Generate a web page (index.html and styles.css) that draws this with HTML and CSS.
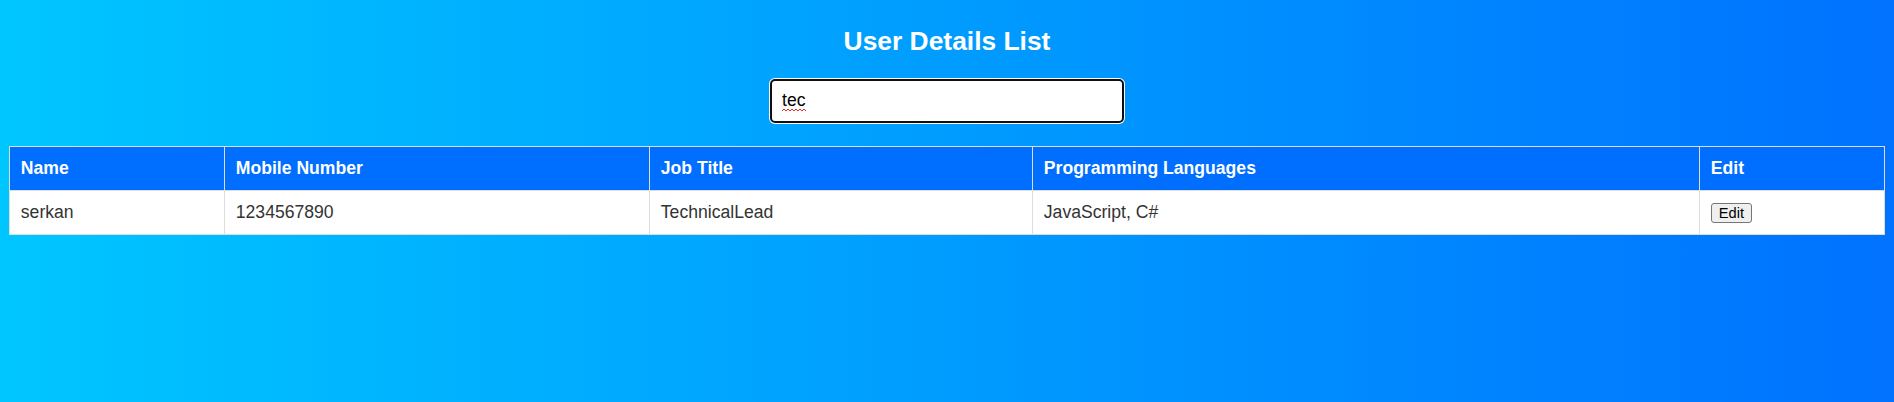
FILE: index.html
```html
<!DOCTYPE html>
<html lang="en">
<head>
<meta charset="utf-8">
<title>User Details List</title>
<link rel="stylesheet" href="styles.css">
</head>
<body>
<div class="page">
  <h2 class="title">User Details List</h2>
  <div class="search-row">
    <div class="search-wrap">
      <input class="search-input" type="text" value="tec" aria-label="Search">
      <svg class="spell" width="24" height="4" viewBox="0 0 24 4" aria-hidden="true"><path d="M0 3 L2 1 L4 3 L6 1 L8 3 L10 1 L12 3 L14 1 L16 3 L18 1 L20 3 L22 1 L24 3" fill="none" stroke="#e8262c" stroke-width="1"/></svg>
    </div>
  </div>
  <table class="users">
    <colgroup>
      <col class="c-name">
      <col class="c-mobile">
      <col class="c-job">
      <col class="c-lang">
      <col class="c-edit">
    </colgroup>
    <thead>
      <tr>
        <th>Name</th>
        <th>Mobile Number</th>
        <th>Job Title</th>
        <th>Programming Languages</th>
        <th>Edit</th>
      </tr>
    </thead>
    <tbody>
      <tr>
        <td>serkan</td>
        <td>1234567890</td>
        <td>TechnicalLead</td>
        <td>JavaScript, C#</td>
        <td><button class="edit-btn" type="button">Edit</button></td>
      </tr>
    </tbody>
  </table>
</div>
</body>
</html>
```

FILE: styles.css
```css
html, body {
  margin: 0;
  padding: 0;
}

body {
  min-height: 100vh;
  background: linear-gradient(to right, #00c6ff, #0072ff);
  font-family: "Liberation Sans", Arial, sans-serif;
}

.page {
  padding: 8.8px;
}

.title {
  margin: 17px 0 22px;
  color: #ffffff;
  font-size: 26.4px;
  font-weight: bold;
  text-align: center;
  line-height: normal;
}

.search-row {
  display: flex;
  justify-content: center;
  margin-bottom: 23px;
}

.search-wrap {
  position: relative;
}

.search-input {
  display: block;
  box-sizing: border-box;
  width: 354px;
  height: 44px;
  padding: 0 10px;
  border: 2px solid #101010;
  border-radius: 5px;
  box-shadow: 0 0 0 1px #ffffff;
  background: #ffffff;
  color: #000000;
  font-family: "Liberation Sans", Arial, sans-serif;
  font-size: 17.6px;
  outline: none;
}

.spell {
  position: absolute;
  left: 12px;
  top: 29px;
}

.users {
  width: 100%;
  table-layout: fixed;
  border-collapse: collapse;
  background: #ffffff;
}

.c-name { width: 215px; }
.c-mobile { width: 425px; }
.c-job { width: 383px; }
.c-lang { width: 667px; }

.users th,
.users td {
  border: 1px solid #dddddd;
  padding: 11px;
  text-align: left;
  font-size: 17.6px;
  line-height: normal;
}

.users th {
  background: #006eff;
  color: #ffffff;
  font-weight: bold;
}

.users td {
  color: #333333;
}

.edit-btn {
  font-family: "Liberation Sans", Arial, sans-serif;
  font-size: 14.67px;
  padding: 1px 7px;
  border: 1px solid #767676;
  border-radius: 3px;
  background: #efefef;
  color: #000000;
}
```
